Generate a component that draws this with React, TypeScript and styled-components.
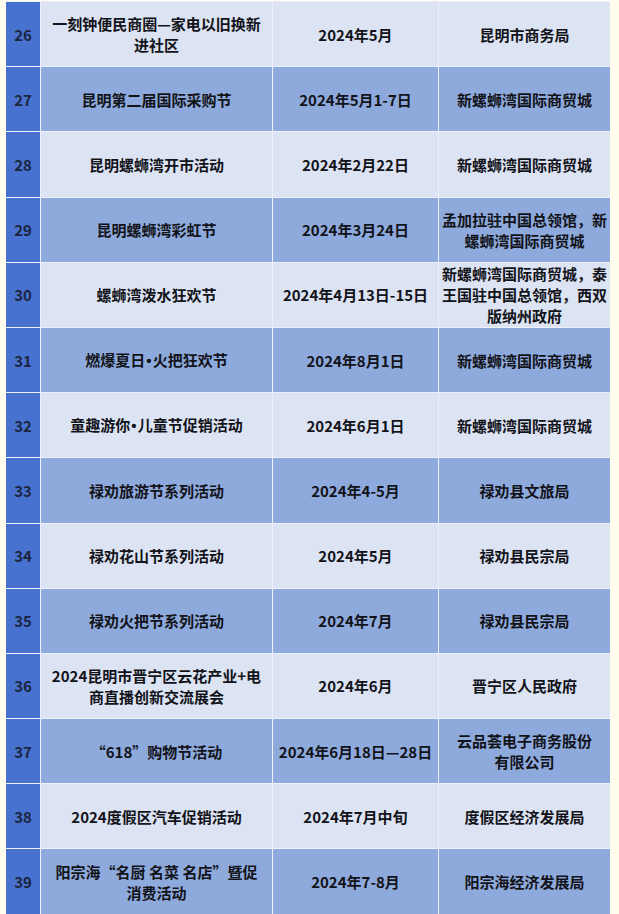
import React from "react";
import styled, { createGlobalStyle } from "styled-components";

type Item = {
  no: number;
  name: React.ReactNode[];
  date: string;
  host: string[];
};

const Dot = styled.span`
  font-family: "Liberation Sans", sans-serif;
  font-weight: 700;
  margin: 0 1px;
`;

const items: Item[] = [
  { no: 26, name: ["一刻钟便民商圈—家电以旧换新", "进社区"], date: "2024年5月", host: ["昆明市商务局"] },
  { no: 27, name: ["昆明第二届国际采购节"], date: "2024年5月1-7日", host: ["新螺蛳湾国际商贸城"] },
  { no: 28, name: ["昆明螺蛳湾开市活动"], date: "2024年2月22日", host: ["新螺蛳湾国际商贸城"] },
  { no: 29, name: ["昆明螺蛳湾彩虹节"], date: "2024年3月24日", host: ["孟加拉驻中国总领馆，新", "螺蛳湾国际商贸城"] },
  {
    no: 30,
    name: ["螺蛳湾泼水狂欢节"],
    date: "2024年4月13日-15日",
    host: ["新螺蛳湾国际商贸城，泰", "王国驻中国总领馆，西双", "版纳州政府"],
  },
  {
    no: 31,
    name: [
      <>
        燃爆夏日<Dot>•</Dot>火把狂欢节
      </>,
    ],
    date: "2024年8月1日",
    host: ["新螺蛳湾国际商贸城"],
  },
  {
    no: 32,
    name: [
      <>
        童趣游你<Dot>•</Dot>儿童节促销活动
      </>,
    ],
    date: "2024年6月1日",
    host: ["新螺蛳湾国际商贸城"],
  },
  { no: 33, name: ["禄劝旅游节系列活动"], date: "2024年4-5月", host: ["禄劝县文旅局"] },
  { no: 34, name: ["禄劝花山节系列活动"], date: "2024年5月", host: ["禄劝县民宗局"] },
  { no: 35, name: ["禄劝火把节系列活动"], date: "2024年7月", host: ["禄劝县民宗局"] },
  {
    no: 36,
    name: ["2024昆明市晋宁区云花产业+电", "商直播创新交流展会"],
    date: "2024年6月",
    host: ["晋宁区人民政府"],
  },
  { no: 37, name: ["“618”购物节活动"], date: "2024年6月18日—28日", host: ["云品荟电子商务股份", "有限公司"] },
  { no: 38, name: ["2024度假区汽车促销活动"], date: "2024年7月中旬", host: ["度假区经济发展局"] },
  {
    no: 39,
    name: ["阳宗海“名厨 名菜 名店”暨促", "消费活动"],
    date: "2024年7-8月",
    host: ["阳宗海经济发展局"],
  },
];

const GlobalStyle = createGlobalStyle`
  html, body {
    margin: 0;
    padding: 0;
    background: #fffcee;
  }
  body {
    font-family: "Noto Sans CJK SC", "Noto Sans", sans-serif;
  }
`;

const Page = styled.div`
  padding: 1px 9px 0 6px;
  width: 619px;
  box-sizing: border-box;
`;

const Table = styled.div`
  display: flex;
  flex-direction: column;
  gap: 1px;
  padding: 1px 0;
  background: #eef1fa;
`;

const Row = styled.div`
  display: grid;
  grid-template-columns: 34px 231px 165px 171px;
  column-gap: 1px;
  height: 64.2px;
`;

const NoCell = styled.div`
  display: flex;
  align-items: center;
  justify-content: center;
  background: #4872cf;
  color: #1b2540;
  font-size: 15px;
  font-weight: 700;
`;

const Cell = styled.div<{ $shade: "light" | "mid" }>`
  display: flex;
  flex-direction: column;
  align-items: center;
  justify-content: center;
  padding: 0 2px;
  background: ${(p) => (p.$shade === "light" ? "#dce3f3" : "#8eaadc")};
  color: #121319;
  font-size: 15px;
  font-weight: 700;
  line-height: 21px;
  text-align: center;
  white-space: nowrap;
`;

const Line = styled.span`
  display: block;
`;

const App = () => {
  return (
    <Page>
      <GlobalStyle />
      <Table>
        {items.map((it, i) => {
          const shade = i % 2 === 0 ? "light" : "mid";
          return (
            <Row key={it.no}>
              <NoCell>{it.no}</NoCell>
              <Cell $shade={shade}>
                {it.name.map((l, j) => (
                  <Line key={j}>{l}</Line>
                ))}
              </Cell>
              <Cell $shade={shade}>{it.date}</Cell>
              <Cell $shade={shade}>
                {it.host.map((l) => (
                  <Line key={l}>{l}</Line>
                ))}
              </Cell>
            </Row>
          );
        })}
      </Table>
    </Page>
  );
};

export default App;
